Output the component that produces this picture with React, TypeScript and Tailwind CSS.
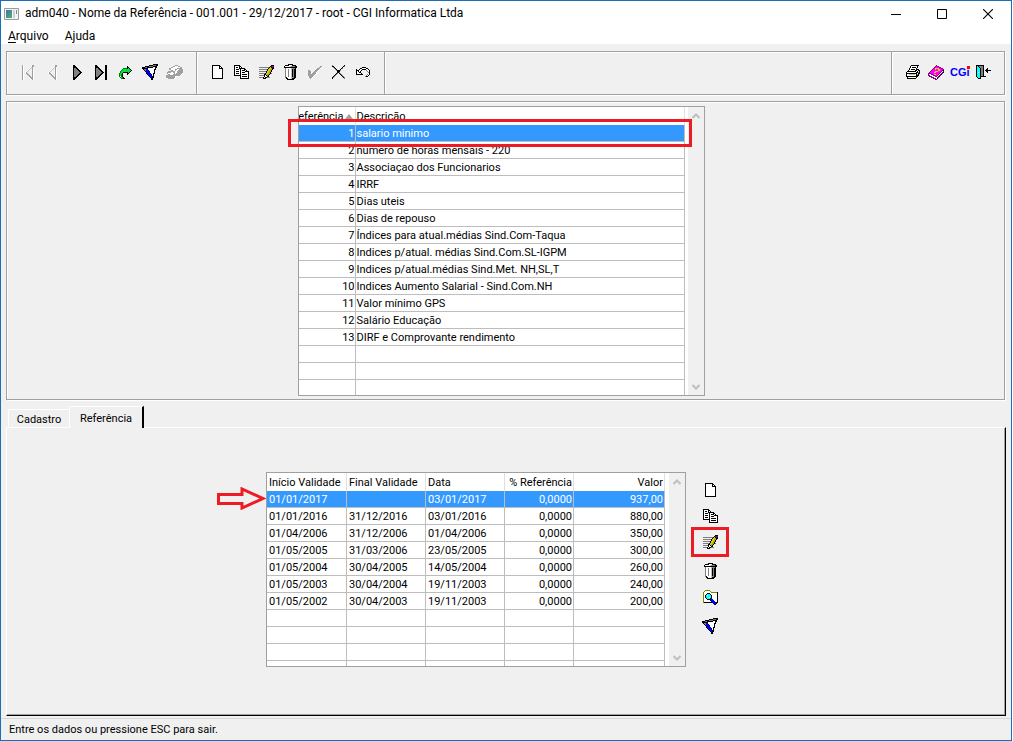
import React from "react";

const PALETTE: Record<string, string> = {
  k: "#000000",
  g: "#808080",
  l: "#c0c0c0",
  w: "#ffffff",
  y: "#a8a800",
  Y: "#d8d020",
  b: "#0000ff",
  n: "#000080",
  G: "#008000",
  L: "#00e040",
  c: "#00ffff",
  t: "#808000",
  m: "#ff00ff",
  p: "#800080",
  a: "#a0a0a0",
};

const NEW = [
  "kkkkkkkk...",
  "kwwwwwwkk..",
  "kwwwwwwkwk.",
  "kwwwwwwkkkk",
  "kwwwwwwwwwk",
  "kwwwwwwwwwk",
  "kwwwwwwwwwk",
  "kwwwwwwwwwk",
  "kwwwwwwwwwk",
  "kwwwwwwwwwk",
  "kwwwwwwwwwk",
  "kwwwwwwwwwk",
  "kwwwwwwwwwk",
  "kkkkkkkkkkk",
];
const COPY = [
  "kkkkkk.........",
  "kwwwwkk........",
  "kwkkwkwk.......",
  "kwwwwkkkkkk....",
  "kwkkkwkwwwkk...",
  "kwwwwwkwkkkwk..",
  "kwkkkwkwwwwkkkk",
  "kwwwwwkwkkkwwwk",
  "kwkkkwkwwwwwwwk",
  "kwwwwwkwkkkkkwk",
  "kkkkkkkwwwwwwwk",
  "......kwkkkkkwk",
  "......kwwwwwwwk",
  "......kkkkkkkkk",
];
const EDIT = [
  "............kkk",
  "...........kppp",
  "ggggggggggkYkpk",
  ".........kYYykk",
  "ggggggggkYYyyk.",
  "........kYYyk..",
  "gggggggkYYyyk..",
  ".......kYYyk...",
  "ggggggkYYyykg..",
  ".....kkYyyk....",
  "gggggkwkyk.....",
  ".....kwwkk.....",
  "ggggkwkkggg....",
  "....kkk........",
];
const TRASH = [
  "....kkkkk....",
  ".kkkkwwwkkkk.",
  "kwwwwwlggggkk",
  "kkkkkkkkkkkkk",
  ".gwwwwwlgggk.",
  ".gwwgwwlkgkk.",
  ".gwwgwwlkgkk.",
  ".gwwgwwlkgkk.",
  ".gwwgwwlkgkk.",
  ".gwwgwwlkgkk.",
  ".gwwgwwlkgkk.",
  ".gwwgwwlkgkk.",
  ".gwwgwwlkgkk.",
  ".gkwwwwlggkk.",
  "..kkwwwlkkk..",
  "...kkkkkkk...",
];
const FILTER = [
  "...........kkkkk",
  ".......kkkkgggkk",
  "...kkkkggggkkkk.",
  "kkkggkkkkkkwwkk.",
  "kkkkknwwwwwwwk..",
  ".kggbnwwwwwwkk..",
  "..kgbbnwwwwwk...",
  "...kbbbnwwwwk...",
  "....kbbnwwwwk...",
  "....kbbbnwwkk...",
  ".....kbbbnwk....",
  "......kbbnwk....",
  ".......kbbnk....",
  "........kbkk....",
  ".........kk.....",
  ".........kk.....",
];
const REDO = [
  "........k....",
  "........kk...",
  "....GGGGkLk..",
  "...GLLLLLLLk.",
  "..GLLLLLLLLLk",
  ".GLLLLLLLLLk.",
  ".GLLkkkkkLk..",
  "GLLk....kk...",
  "GLGk....k....",
  "GLGk.........",
  "GwGk.........",
  ".GLGk........",
  "..GGkk.......",
];
const BOOK = [
  ".........aaa.....",
  ".......aawwwaa...",
  ".....aawwwwwwwaa.",
  "...aawwwwwwaaaaa.",
  "...aawwwwaawwaaaa",
  ".....aawwawwaaaaa",
  "..aaaaaaawwaaaaaa",
  ".aaaawwaawwaaaaaa",
  ".awwwwwwawaaaaaaw",
  "..aawwwaaaaaaaaw.",
  "aaaaaaaaaaaaaaw..",
  "aaaaaaaaawwww....",
  "aaaaaaaaaw.......",
  "..aaaaaaww.......",
];
const PRINT = [
  ".....kkkkkkkk.",
  "....kwwwwwwk..",
  "....kwkkkkwk..",
  "...kwwwwwwk...",
  "...kwkkkkwkkk.",
  "..kwwwwwwkkwkk",
  ".kkkkkkkkkwkwk",
  "kwwwwwwwwwkkgk",
  "kkkkkkkkkkkwkk",
  "kwwlllYYlwkgk.",
  "kwwwwwwwwwkkk.",
  "kkkkkkkkkkkk..",
  ".kwwwwwwwwk...",
  ".kkkkkkkkk....",
];
const HELP = [
  "........p.......",
  ".......pmpp.....",
  "......pmmmmpp...",
  ".....pmYYYYmmpp.",
  "....pmmYmmYYmmmp",
  "...pmmmmmmYYmmpk",
  "..pmmmmYYYmmmpwp",
  ".pmmmmYYmmmmpwpk",
  "pppmmmmmmmmpwpp.",
  "pwwppmYYmmpwpk..",
  "ppwwwppmmpwpp...",
  ".pppwwwppwpk....",
  "...pppwwwpp.....",
  ".....pppwk......",
  ".......pp.......",
];
const DOOR = [
  "kkkkkkkk.......",
  "kckggggk.......",
  "kcckgggk.......",
  "kccckggk...k...",
  "kccckggk..kk...",
  "kccckggk.kkkkkk",
  "kccckggk..kk...",
  "kcwckggk...k...",
  "kccckggk.......",
  "kccckggk.......",
  "kccckggk.......",
  "kccckkkkkk.....",
  ".kcck..........",
  "..kkk..........",
];
const SEARCH = [
  "..ttttt........",
  ".twwwwwt.......",
  "twwwwwwwttttttk",
  "twwwkkkwwwwwwwk",
  "twwkccckwwwwwwk",
  "twkcwccckwwwwwk",
  "twkccccckwwwwwk",
  "twkcccwckwwwwwk",
  "twwkccckbwwwwwk",
  "twwwkkkkbbwwwwk",
  "twwwwwwnbbbwwwk",
  "twwwwwwwnbbbwwk",
  "tkkkkkkkknbbbkk",
  "..........nbbk.",
  "...........nk..",
];
const FIRST = [
  "aw........aa",
  "aw.......waa",
  "aw......wlaw",
  "aw.....wl.aw",
  "aw....wl..aw",
  "aw...wl...aw",
  "aw..wl....aw",
  "aw.wa.....aw",
  "aw..aa....aw",
  "aw...aa...aw",
  "aw....aa..aw",
  "aw.....aa.aw",
  "aw......aaaw",
  "aw.......aaw",
  "aw........aw",
];
const PREV = FIRST.map((row) => row.slice(3));
const NEXT = [
  "kk.......",
  "kkk......",
  "kkkk.....",
  "kggkk....",
  "kgggkk...",
  "kggggkk..",
  "kgggggkk.",
  "kggggggkk",
  "kgggggkk.",
  "kggggkk..",
  "kgggkk...",
  "kggkk....",
  "kkkk.....",
  "kkk......",
  "kk.......",
];
const LAST = NEXT.map((row) => row + ".kk");
const CHECK = [
  "............aa",
  "...........aaw",
  ".........aaaw.",
  "........aaaw..",
  "aa.....aaaw...",
  "aaa...aaaw....",
  "aaaw.aaaw.....",
  "aaawaaaaw.....",
  "aaaaaaaw......",
  "aaaaaaw.......",
  ".aaaaw........",
  ".aaaw.........",
  "..aw..........",
];
const CANCEL = [
  "g...........k.",
  "kk.........kg.",
  ".gk.......k...",
  "..gk.....kg...",
  "...gk...k.....",
  "....gkkkg.....",
  ".....kkk......",
  ".....kkg......",
  "....kg.kg.....",
  "...kg...kg....",
  "..kg.....kg...",
  ".kg.......kg..",
  "kg.........kg.",
  "k...........g.",
];
const UNDO = [
  "......kkkk.....",
  "....kkwwwwkk...",
  "k..kwwkkkkwwk..",
  "kkkwwk....gwwk.",
  "kwkwk......gwk.",
  "kwwkk.......gk.",
  "kwwwwk......wk.",
  "kkkkkkk....gwk.",
  "..........gwk..",
  ".........gkk...",
];

function Pixels({ rows }: { rows: string[] }) {
  const width = rows[0].length;
  return (
    <svg
      width={width}
      height={rows.length}
      viewBox={`0 0 ${width} ${rows.length}`}
      shapeRendering="crispEdges"
      aria-hidden="true"
      className="shrink-0"
    >
      {rows.flatMap((row, y) =>
        row
          .split("")
          .map((c, x) =>
            PALETTE[c] ? <rect key={`${x}-${y}`} x={x} y={y} width={1} height={1} fill={PALETTE[c]} /> : null,
          ),
      )}
    </svg>
  );
}

function Tool({ label, rows, disabled }: { label: string; rows: string[]; disabled?: boolean }) {
  return (
    <button type="button" aria-label={label} disabled={disabled} className="flex h-6 flex-1 items-center justify-center">
      <Pixels rows={rows} />
    </button>
  );
}

function SideTool({ label, rows, marked }: { label: string; rows: string[]; marked?: boolean }) {
  return (
    <button type="button" aria-label={label} className="relative flex h-[26px] w-[26px] items-center justify-center">
      <Pixels rows={rows} />
      {marked && <span className="absolute -inset-x-[6px] -inset-y-[2px] border-3 border-[#ed1c24]" />}
    </button>
  );
}

const ETCHED = "border border-[#a0a0a0] shadow-[1px_1px_0_#fff,inset_1px_1px_0_#fff]";

function ScrollBar() {
  return (
    <div className="flex w-4 shrink-0 flex-col justify-between bg-[#f0f0f0]">
      <button type="button" aria-label="Rolar para cima" className="flex h-[17px] items-center justify-center">
        <svg width="8" height="6" viewBox="0 0 8 6" fill="none" stroke="#bfbfbf" strokeWidth="2" aria-hidden="true">
          <path d="M0.5 5 4 1.5 7.5 5" />
        </svg>
      </button>
      <button type="button" aria-label="Rolar para baixo" className="flex h-[17px] items-center justify-center">
        <svg width="8" height="6" viewBox="0 0 8 6" fill="none" stroke="#bfbfbf" strokeWidth="2" aria-hidden="true">
          <path d="M0.5 1 4 4.5 7.5 1" />
        </svg>
      </button>
    </div>
  );
}

const REFERENCES = [
  "salario minimo",
  "numero de horas mensais - 220",
  "Associaçao dos Funcionarios",
  "IRRF",
  "Dias uteis",
  "Dias de repouso",
  "Índices para atual.médias Sind.Com-Taqua",
  "Indices p/atual. médias Sind.Com.SL-IGPM",
  "Indices p/atual.médias Sind.Met. NH,SL,T",
  "Indices Aumento Salarial - Sind.Com.NH",
  "Valor mínimo GPS",
  "Salário Educação",
  "DIRF e Comprovante rendimento",
  "",
  "",
  "",
];

const VALUES = [
  ["01/01/2017", "", "03/01/2017", "0,0000", "937,00"],
  ["01/01/2016", "31/12/2016", "03/01/2016", "0,0000", "880,00"],
  ["01/04/2006", "31/12/2006", "01/04/2006", "0,0000", "350,00"],
  ["01/05/2005", "31/03/2006", "23/05/2005", "0,0000", "300,00"],
  ["01/05/2004", "30/04/2005", "14/05/2004", "0,0000", "260,00"],
  ["01/05/2003", "30/04/2004", "19/11/2003", "0,0000", "240,00"],
  ["01/05/2002", "30/04/2003", "19/11/2003", "0,0000", "200,00"],
  ["", "", "", "", ""],
  ["", "", "", "", ""],
  ["", "", "", "", ""],
  ["", "", "", "", ""],
];

const TABLE = "table-fixed border-separate border-spacing-0";
const CELL = "h-[17px] overflow-hidden border-r border-b border-[#bdbdbd] pt-[2px] leading-[14px] whitespace-nowrap";
const HEAD = "h-[18px] overflow-hidden border-r border-[#e0e0e0] pt-[2px] font-normal leading-4 whitespace-nowrap";

function ReferenceList() {
  return (
    <div className="relative border border-[#a0a0a0] bg-white">
      <div className="flex h-[288px] overflow-hidden">
        <table className={`${TABLE} mr-[3px] w-[386px]`}>
          <colgroup>
            <col className="w-[57px]" />
            <col />
          </colgroup>
          <thead>
            <tr>
              <th className={HEAD}>
                <span className="flex items-center justify-end gap-px pr-[2px]">
                  Referência
                  <svg width="8" height="5" viewBox="0 0 8 5" aria-hidden="true" className="mb-px shrink-0">
                    <path d="M0 5 4 0 8 5Z" fill="#a0a0a0" />
                  </svg>
                </span>
              </th>
              <th className={`${HEAD} pl-px text-left`}>Descrição</th>
            </tr>
          </thead>
          <tbody>
            {REFERENCES.map((text, i) => (
              <tr key={i} className={i === 0 ? "bg-[#3399ff] text-white" : ""}>
                <td className={`${CELL} text-right`}>{text && i + 1}</td>
                <td className={`${CELL} pl-px`}>{text}</td>
              </tr>
            ))}
          </tbody>
        </table>
        <ScrollBar />
      </div>
      <span className="pointer-events-none absolute top-[12px] right-[12px] -left-[11px] h-7 border-3 border-[#ed1c24]" />
    </div>
  );
}

function ValueList() {
  return (
    <div className="relative border border-[#a0a0a0] bg-white">
      <div className="flex h-[193px] overflow-hidden">
        <table className={`${TABLE} mr-1 w-[398px]`}>
          <colgroup>
            <col className="w-[80px]" />
            <col className="w-[79px]" />
            <col className="w-[79px]" />
            <col className="w-[69px]" />
            <col />
          </colgroup>
          <thead>
            <tr>
              {["Início Validade", "Final Validade", "Data", "% Referência", "Valor"].map((h, c) => (
                <th key={h} className={`${HEAD} ${c > 2 ? "pr-px text-right" : "pl-[2px] text-left"}`}>
                  {h}
                </th>
              ))}
            </tr>
          </thead>
          <tbody>
            {VALUES.map((row, i) => (
              <tr key={i} className={i === 0 ? "bg-[#3399ff] text-white" : ""}>
                {row.map((v, c) => (
                  <td key={c} className={`${CELL} ${c > 2 ? "pr-px text-right" : "pl-[2px]"}`}>
                    {v}
                  </td>
                ))}
              </tr>
            ))}
          </tbody>
        </table>
        <ScrollBar />
      </div>
      <svg
        width="49"
        height="23"
        viewBox="0 0 49 23"
        fill="none"
        stroke="#ed1c24"
        strokeWidth="3"
        aria-hidden="true"
        className="absolute top-[14px] -left-[50px]"
      >
        <path d="M1.5 7.5H25V2L46 11.5 25 21V16.5H1.5Z" />
      </svg>
    </div>
  );
}

export default function App() {
  return (
    <div className="min-h-screen bg-white pr-px font-[Roboto,'Liberation_Sans',sans-serif] text-[11px] text-black">
      <div className="flex min-h-screen flex-col border border-[#1a6fb8] bg-[#f0f0f0]">
        <header className="bg-white text-[12px]">
          <div className="flex h-[25px] items-center">
            <svg width="15" height="12" viewBox="0 0 15 12" aria-hidden="true" className="ml-[3px] shrink-0">
              <defs>
                <linearGradient id="pane" x1="0" y1="0" x2="1" y2="1">
                  <stop offset="0" stopColor="#3b78a8" />
                  <stop offset="1" stopColor="#4fae7c" />
                </linearGradient>
              </defs>
              <path d="M0.5 0.5H14.5V11.5H0.5Z" fill="#f4f4f4" stroke="#9a9a9a" />
              <path d="M2 2H8V10H2Z" fill="url(#pane)" />
              <path d="M9 2H11V10H9Z" fill="#d0d4d8" />
              <path d="M12 2H13V6H12Z" fill="#5a9a80" />
            </svg>
            <h1 className="ml-[6px] flex-1 pb-[2px] whitespace-nowrap">
              adm040 - Nome da Referência - 001.001 - 29/12/2017 - root - CGI Informatica Ltda
            </h1>
            <button type="button" aria-label="Minimizar" className="flex h-full w-[46px] items-center justify-center">
              <svg width="10" height="10" viewBox="0 0 10 10" stroke="#000" aria-hidden="true">
                <path d="M0 5.5H10" />
              </svg>
            </button>
            <button type="button" aria-label="Maximizar" className="flex h-full w-[46px] items-center justify-center">
              <svg width="10" height="10" viewBox="0 0 10 10" fill="none" stroke="#000" aria-hidden="true">
                <path d="M0.5 0.5H9.5V9.5H0.5Z" />
              </svg>
            </button>
            <button type="button" aria-label="Fechar" className="flex h-full w-[46px] items-center justify-center">
              <svg width="10" height="10" viewBox="0 0 10 10" fill="none" stroke="#000" strokeWidth="1.1" aria-hidden="true">
                <path d="M0 0 10 10M10 0 0 10" />
              </svg>
            </button>
          </div>
          <nav className="flex h-[18px] gap-4 pl-[7px] leading-5">
            <button type="button">
              <span className="underline underline-offset-2">A</span>rquivo
            </button>
            <button type="button">Ajuda</button>
          </nav>
        </header>

        <div className="mt-[7px] mr-[6px] ml-[5px] flex h-11">
          <div className={`${ETCHED} flex w-[191px] items-center px-[9px] pb-[2px]`}>
            <Tool label="Primeiro" rows={FIRST} disabled />
            <Tool label="Anterior" rows={PREV} disabled />
            <Tool label="Próximo" rows={NEXT} />
            <Tool label="Último" rows={LAST} />
            <Tool label="Ir para" rows={REDO} />
            <Tool label="Filtrar" rows={FILTER} />
            <Tool label="Consultar" rows={BOOK} disabled />
          </div>
          <div className={`${ETCHED} flex w-[188px] items-center border-l-0 px-2 pb-[2px]`}>
            <Tool label="Novo" rows={NEW} />
            <Tool label="Copiar" rows={COPY} />
            <Tool label="Editar" rows={EDIT} />
            <Tool label="Excluir" rows={TRASH} />
            <Tool label="Confirmar" rows={CHECK} disabled />
            <Tool label="Cancelar" rows={CANCEL} />
            <Tool label="Desfazer" rows={UNDO} />
          </div>
          <div className={`${ETCHED} flex-1 border-l-0`} />
          <div className={`${ETCHED} flex w-[113px] items-center border-l-0 px-[9px] pb-[2px]`}>
            <Tool label="Imprimir" rows={PRINT} />
            <Tool label="Ajuda" rows={HELP} />
            <button
              type="button"
              className="relative flex h-6 flex-1 items-center justify-center font-['Liberation_Sans',sans-serif] text-[11px] font-black text-[#0000ff]"
            >
              CGi
              <span className="absolute top-[6px] right-[2px] h-[3px] w-[3px] bg-[#ff0000]" />
            </button>
            <Tool label="Sair" rows={DOOR} />
          </div>
        </div>

        <section className={`${ETCHED} mt-[6px] mr-[6px] ml-[5px] flex justify-center pt-1 pr-[9px] pb-[3px]`}>
          <ReferenceList />
        </section>

        <div role="tablist" className="relative z-10 mt-[6px] ml-[5px] flex items-end">
          <button
            type="button"
            role="tab"
            aria-selected="false"
            className="ml-[2px] h-[18px] w-[61px] rounded-tl-[2px] border-t border-l border-white pt-[2px] leading-4"
          >
            Cadastro
          </button>
          <button
            type="button"
            role="tab"
            aria-selected="true"
            className="-mb-px h-[22px] w-[75px] rounded-tl-[2px] border-t border-r-2 border-l border-white border-r-black bg-[#f0f0f0] pt-[2px] leading-4"
          >
            Referência
          </button>
        </div>
        <section className="mr-[5px] ml-[5px] flex flex-1 flex-col border-t border-r border-b border-l border-white border-r-black border-b-black shadow-[inset_-1px_-1px_0_#a0a0a0]">
          <div className="flex items-start justify-center pt-11 pr-[23px] pb-11">
            <ValueList />
            <div className="ml-[11px] flex flex-col gap-[3px] pt-[5px]">
              <div>
                <SideTool label="Novo valor" rows={NEW} />
                <SideTool label="Copiar valor" rows={COPY} />
                <SideTool label="Editar valor" rows={EDIT} marked />
              </div>
              <div>
                <SideTool label="Excluir valor" rows={TRASH} />
                <SideTool label="Consultar valor" rows={SEARCH} />
              </div>
              <SideTool label="Filtrar valores" rows={FILTER} />
            </div>
          </div>
        </section>

        <footer className="mt-[2px] h-[22px] border-t border-[#d7d7d7] pl-2 leading-[22px]">
          Entre os dados ou pressione ESC para sair.
        </footer>
      </div>
    </div>
  );
}
